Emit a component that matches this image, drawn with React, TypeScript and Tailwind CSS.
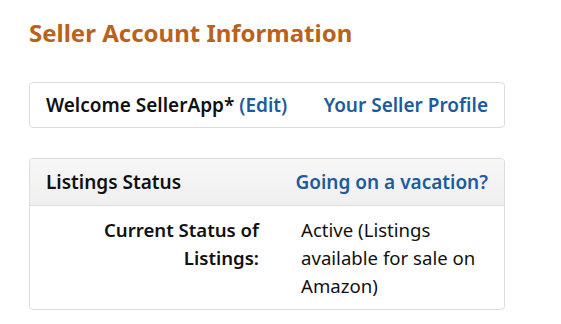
export default function App() {
  return (
    <div className="min-h-screen w-full bg-white px-[29px] pt-[18px] font-['Noto_Sans',sans-serif] text-[#111]">
      <h1 className="text-[24px] font-bold leading-[30px] text-[#b9621c]">Seller Account Information</h1>

      <div className="mt-[34px] flex h-[46px] w-[476px] items-center justify-between rounded-[4px] border border-[#dcdcdc] px-4">
        <div className="text-[19px] font-semibold">
          Welcome SellerApp* <span className="text-[#1d5b9c]">(Edit)</span>
        </div>
        <div className="text-[19px] font-semibold text-[#1d5b9c]">Your Seller Profile</div>
      </div>

      <div className="mt-[30px] w-[476px] overflow-hidden rounded-[4px] border border-[#dcdcdc]">
        <div className="flex h-[47px] items-center justify-between border-b border-[#dcdcdc] bg-gradient-to-b from-[#f7f7f7] to-[#efefef] px-4">
          <div className="text-[19px] font-semibold">Listings Status</div>
          <div className="text-[19px] font-semibold text-[#1d5b9c]">Going on a vacation?</div>
        </div>
        <div className="flex gap-[42px] pb-[9px] pl-4 pt-[10px] text-[18.6px] leading-[28px]">
          <div className="w-[213px] text-right font-semibold">Current Status of Listings:</div>
          <div className="w-[190px]">Active (Listings available for sale on Amazon)</div>
        </div>
      </div>
    </div>
  );
}
